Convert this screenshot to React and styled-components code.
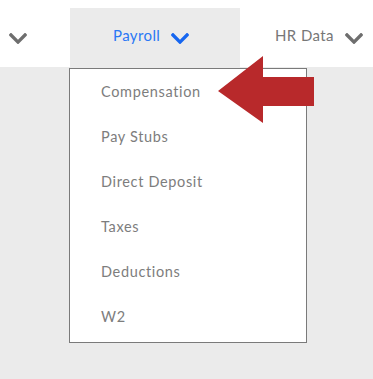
import React from "react";
import styled, { createGlobalStyle } from "styled-components";

const Global = createGlobalStyle`
  html, body { margin: 0; padding: 0; }
  body {
    width: 373px;
    height: 379px;
    overflow: hidden;
    background: #ebebeb;
    font-family: Lato, "Noto Sans", sans-serif;
  }
`;

const Page = styled.div`
  width: 373px;
  height: 379px;
  background: #ebebeb;
`;

const Header = styled.header`
  background: #ffffff;
  height: 67px;
  padding-top: 8px;
  box-sizing: border-box;
  display: grid;
  grid-template-columns: 70px 170px 1fr;
`;

const NavItem = styled.div`
  position: relative;
  display: flex;
  align-items: center;
  justify-content: ${(p) => (p.$end ? "flex-end" : "flex-start")};
  padding: 0 ${(p) => p.$pr || 0}px 0 ${(p) => p.$pl || 0}px;
  background: ${(p) => (p.$active ? "#ebebeb" : "transparent")};
  color: ${(p) => (p.$active ? "#2a78f5" : "#777777")};
  font-size: 15px;
  letter-spacing: 0.4px;
  white-space: nowrap;
`;

const Label = styled.span`
  margin-right: 11px;
  margin-top: -6px;
`;

const Chevron = styled.svg`
  width: 18px;
  height: 11px;
  flex: none;
  margin-top: 2px;
  fill: ${(p) => (p.$active ? "#1666f0" : "#6e6e6e")};
`;

const Dropdown = styled.ul`
  position: absolute;
  top: calc(100% + 1px);
  left: -1px;
  width: 238px;
  margin: 0;
  padding: 0 0 3px;
  list-style: none;
  box-sizing: border-box;
  background: #ffffff;
  border: 1px solid #7a7a7a;
  z-index: 2;
`;

const MenuItem = styled.li`
  height: 45px;
  display: flex;
  align-items: center;
  padding-left: 31px;
  color: #7d7d7d;
  font-size: 14.5px;
  letter-spacing: 0.65px;
`;

const Arrow = styled.svg`
  position: absolute;
  left: 148px;
  top: 48px;
  width: 96px;
  height: 67px;
  z-index: 3;
`;

const ChevronIcon = ({ active }) => (
  <Chevron $active={active} viewBox="5 123 438 266" preserveAspectRatio="none">
    <path d="M207.029 381.476L12.686 187.132c-9.373-9.373-9.373-24.569 0-33.941l22.667-22.667c9.357-9.357 24.522-9.375 33.901-.04L224 284.505l154.745-154.021c9.379-9.335 24.544-9.317 33.901.04l22.667 22.667c9.373 9.373 9.373 24.569 0 33.941L240.971 381.476c-9.373 9.372-24.569 9.372-33.942 0z" />
  </Chevron>
);

const items = ["Compensation", "Pay Stubs", "Direct Deposit", "Taxes", "Deductions", "W2"];

export default function App() {
  return (
    <>
      <Global />
      <Page>
        <Header>
          <NavItem $end $pr={43}>
            <ChevronIcon />
          </NavItem>
          <NavItem $active $pl={43}>
            <Label>Payroll</Label>
            <ChevronIcon active />
            <Dropdown>
              {items.map((t) => (
                <MenuItem key={t}>{t}</MenuItem>
              ))}
            </Dropdown>
            <Arrow viewBox="0 0 96 67">
              <polygon
                points="0,35 45,0 45,21 96,21 96,50 45,50 45,67"
                fill="#b8292b"
              />
            </Arrow>
          </NavItem>
          <NavItem $pl={35}>
            <Label>HR Data</Label>
            <ChevronIcon />
          </NavItem>
        </Header>
      </Page>
    </>
  );
}
